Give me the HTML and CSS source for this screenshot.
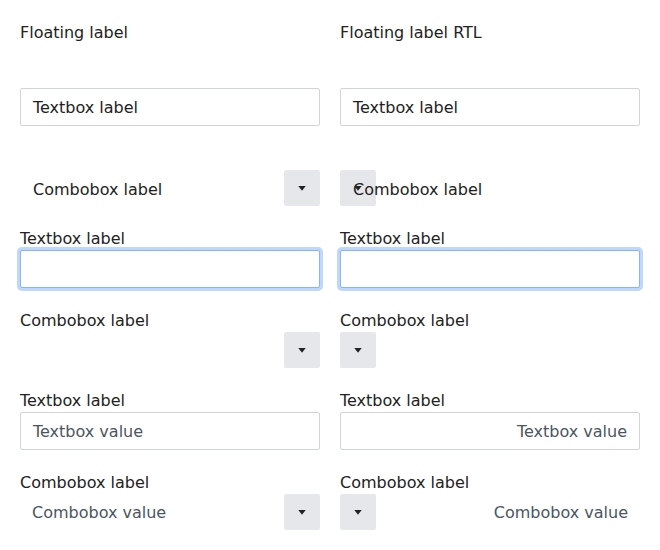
FILE: index.html
```html
<!DOCTYPE html>
<html lang="en">
<head>
<meta charset="utf-8">
<title>Floating labels</title>
<link rel="stylesheet" href="styles.css">
</head>
<body>
<main class="page">
  <section class="col">
    <h2 class="title">Floating label</h2>

    <div class="field field--floating">
      <div class="control">
        <div class="textbox"></div>
        <span class="float-label">Textbox label</span>
      </div>
    </div>

    <div class="field field--floating">
      <div class="control">
        <div class="combobox">
          <span class="combobox__value"></span>
          <span class="combobox__button"><svg width="8" height="5" viewBox="0 0 8 5"><polygon points="0.3,0 7.7,0 4,4.8" fill="#222"/></svg></span>
        </div>
        <span class="float-label float-label--combo">Combobox label</span>
      </div>
    </div>

    <div class="field">
      <label class="label">Textbox label</label>
      <div class="textbox is-focused"></div>
    </div>

    <div class="field">
      <label class="label">Combobox label</label>
      <div class="combobox">
        <span class="combobox__value"></span>
        <span class="combobox__button"><svg width="8" height="5" viewBox="0 0 8 5"><polygon points="0.3,0 7.7,0 4,4.8" fill="#222"/></svg></span>
      </div>
    </div>

    <div class="field">
      <label class="label">Textbox label</label>
      <div class="textbox"><span class="value">Textbox value</span></div>
    </div>

    <div class="field">
      <label class="label">Combobox label</label>
      <div class="combobox">
        <span class="combobox__value value">Combobox value</span>
        <span class="combobox__button"><svg width="8" height="5" viewBox="0 0 8 5"><polygon points="0.3,0 7.7,0 4,4.8" fill="#222"/></svg></span>
      </div>
    </div>
  </section>

  <section class="col">
    <h2 class="title">Floating label RTL</h2>

    <div class="field field--floating">
      <div class="control">
        <div class="textbox rtl"></div>
        <span class="float-label">Textbox label</span>
      </div>
    </div>

    <div class="field field--floating">
      <div class="control">
        <div class="combobox rtl">
          <span class="combobox__value"></span>
          <span class="combobox__button"><svg width="8" height="5" viewBox="0 0 8 5"><polygon points="0.3,0 7.7,0 4,4.8" fill="#222"/></svg></span>
        </div>
        <span class="float-label float-label--combo">Combobox label</span>
      </div>
    </div>

    <div class="field">
      <label class="label">Textbox label</label>
      <div class="textbox rtl is-focused"></div>
    </div>

    <div class="field">
      <label class="label">Combobox label</label>
      <div class="combobox rtl">
        <span class="combobox__value"></span>
        <span class="combobox__button"><svg width="8" height="5" viewBox="0 0 8 5"><polygon points="0.3,0 7.7,0 4,4.8" fill="#222"/></svg></span>
      </div>
    </div>

    <div class="field">
      <label class="label">Textbox label</label>
      <div class="textbox rtl"><span class="value">Textbox value</span></div>
    </div>

    <div class="field">
      <label class="label">Combobox label</label>
      <div class="combobox rtl">
        <span class="combobox__value value">Combobox value</span>
        <span class="combobox__button"><svg width="8" height="5" viewBox="0 0 8 5"><polygon points="0.3,0 7.7,0 4,4.8" fill="#222"/></svg></span>
      </div>
    </div>
  </section>
</main>
</body>
</html>
```

FILE: styles.css
```css
html, body {
  margin: 0;
  padding: 0;
  background: #ffffff;
}

body {
  font-family: "DejaVu Sans", sans-serif;
  font-size: 16px;
  color: #222222;
}

.page {
  display: grid;
  grid-template-columns: 300px 300px;
  column-gap: 20px;
  padding: 20px;
}

.col {
  display: flex;
  flex-direction: column;
  gap: 20px;
}

.title {
  margin: 0;
  height: 24px;
  box-sizing: border-box;
  padding-top: 2px;
  font-size: 16px;
  font-weight: normal;
  line-height: 22px;
}

.field {
  display: flex;
  flex-direction: column;
}

.field--floating {
  padding-top: 24px;
}

.label {
  display: block;
  box-sizing: border-box;
  height: 24px;
  padding-top: 2px;
  line-height: 22px;
}

.control {
  position: relative;
}

.float-label {
  position: absolute;
  left: 13px;
  top: 1px;
  height: 38px;
  line-height: 38px;
  pointer-events: none;
}

.float-label--combo {
  top: 2px;
  height: 36px;
  line-height: 36px;
}

.textbox {
  box-sizing: border-box;
  height: 38px;
  border: 1px solid #d1d5db;
  border-radius: 2px;
  padding: 2px 12px 0;
  line-height: 34px;
  background: #ffffff;
}

.textbox.is-focused {
  border-color: #8ab4f8;
  box-shadow: 0 0 0 3px #bfd7fc;
}

.combobox {
  display: flex;
  align-items: center;
  height: 36px;
}

.combobox__value {
  flex: 1;
  box-sizing: border-box;
  height: 36px;
  padding: 2px 12px 0;
  line-height: 34px;
}

.combobox__button {
  width: 36px;
  height: 36px;
  flex: none;
  display: flex;
  align-items: center;
  justify-content: center;
  background: #e5e7eb;
  border-radius: 2px;
}

.rtl {
  direction: rtl;
}

.value {
  color: #4b5563;
}
```
